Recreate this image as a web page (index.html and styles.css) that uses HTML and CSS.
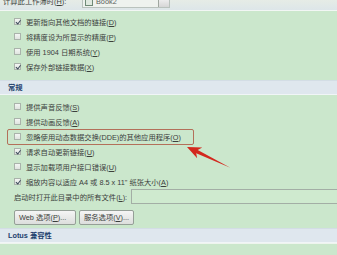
FILE: index.html
```html
<!DOCTYPE html>
<html lang="zh-CN">
<head>
  <meta charset="UTF-8">
  <title>Excel 选项 - 高级</title>
  <meta name="viewport" content="width=device-width, initial-scale=1.0">
  <link rel="stylesheet" href="styles.css">
</head>
<body>

<div class="page">

  <!-- 上一节末尾：计算此工作簿时 -->
  <div class="top">
    <span class="top-label">计算此工作簿时(<u>H</u>):</span>
    <span class="combo"><span class="combo-icon"></span><span>Book2</span><span class="combo-btn"></span></span>
  </div>

  <div class="group">
    <div class="opt"><span class="box on"></span><span>更新指向其他文档的链接(<u>D</u>)</span></div>
    <div class="opt"><span class="box"></span><span>将精度设为所显示的精度(<u>P</u>)</span></div>
    <div class="opt"><span class="box"></span><span>使用 1904 日期系统(<u>Y</u>)</span></div>
    <div class="opt"><span class="box on"></span><span>保存外部链接数据(<u>X</u>)</span></div>
  </div>

  <!-- 常规 -->
  <div class="section">常规</div>

  <div class="group">
    <div class="opt"><span class="box"></span><span>提供声音反馈(<u>S</u>)</span></div>
    <div class="opt"><span class="box"></span><span>提供动画反馈(<u>A</u>)</span></div>
    <div class="opt marked"><span class="box"></span><span>忽略使用动态数据交换(DDE)的其他应用程序(<u>O</u>)</span></div>
    <div class="opt"><span class="box on"></span><span>请求自动更新链接(<u>U</u>)</span></div>
    <div class="opt"><span class="box"></span><span>显示加载项用户接口错误(<u>U</u>)</span></div>
    <div class="opt"><span class="box on"></span><span>缩放内容以适应 A4 或 8.5 x 11" 纸张大小(<u>A</u>)</span></div>

    <div class="path-row">
      <span class="path-label">启动时打开此目录中的所有文件(<u>L</u>):</span>
      <span class="field"></span>
    </div>

    <div class="buttons">
      <span class="btn">Web 选项(<u>P</u>)...</span>
      <span class="btn">服务选项(<u>V</u>)...</span>
    </div>
  </div>

  <!-- Lotus 兼容性 -->
  <div class="section">Lotus 兼容性</div>
  <div class="rest"></div>

  <!-- 标注箭头 -->
  <svg class="arrow" width="337" height="255" viewBox="0 0 337 255">
    <g transform="translate(187 147) rotate(25)">
      <polygon points="0,0 14,-6 11,-1.8 48,0.4 11,1.8 14,6" fill="#d3281e"/>
    </g>
  </svg>

</div>

</body>
</html>
```

FILE: styles.css
```css
body {
  margin: 0;
  padding: 0;
  background: #cbe7cc;
  font-family: "Liberation Sans", "Noto Sans CJK SC", sans-serif;
  font-size: 7.3px;
  color: #3b403c;
  overflow: hidden;
}

.page {
  position: relative;
  width: 337px;
  height: 255px;
  overflow: hidden;
}

u {
  text-decoration: underline;
  text-underline-offset: 1px;
}

/* ===== top row ===== */
.top {
  height: 10px;
  background: linear-gradient(#e6ece6, #dde6e9);
  border-bottom: 1px solid #f2f6f4;
  display: flex;
  align-items: flex-end;
}

.top-label {
  padding-left: 3px;
  width: 79px;
  line-height: 10px;
  margin-bottom: 3px;
  white-space: nowrap;
}

.combo {
  width: 88px;
  height: 12px;
  margin-bottom: 2px;
  box-sizing: border-box;
  border: 1px solid #b9c2bd;
  background: #eef2ee;
  display: flex;
  align-items: center;
  gap: 3px;
  padding-left: 2px;
  line-height: 8px;
  color: #5a5f5b;
}

.combo-icon {
  width: 6px;
  height: 5px;
  border: 1px solid #6f8a76;
  background: #dfe9df;
}

.combo-btn {
  margin-left: auto;
  width: 10px;
  height: 9px;
  background: linear-gradient(#f3f3f3, #d6d6d6);
  border-left: 1px solid #9fa79f;
}

/* ===== option groups ===== */
.group {
  padding-left: 14px;
}

.group:nth-of-type(2) {
  padding-top: 3px;
  padding-bottom: 6px;
}

.group:nth-of-type(4) {
  padding-top: 4px;
  padding-bottom: 3px;
}

.opt {
  height: 15px;
  display: flex;
  align-items: center;
  gap: 5px;
  white-space: nowrap;
}

.box {
  width: 7px;
  height: 7px;
  box-sizing: border-box;
  border: 1px solid #aab3ab;
  background: linear-gradient(#f4f6f4, #dfe4df);
  position: relative;
  flex: none;
}

.box.on::after {
  content: "";
  position: absolute;
  left: 2px;
  top: 0;
  width: 1.5px;
  height: 3.5px;
  border-right: 1px solid #3c4a5a;
  border-bottom: 1px solid #3c4a5a;
  transform: rotate(38deg);
}

.opt.marked {
  margin-left: -7px;
  padding-left: 6px;
  width: 187px;
  height: 16px;
  margin-top: -0.5px;
  margin-bottom: -0.5px;
  box-sizing: border-box;
  border: 1.5px solid #b3705a;
  border-radius: 2px;
}

/* ===== section headers ===== */
.section {
  height: 13px;
  line-height: 13px;
  padding-left: 8px;
  background: #dfe7ee;
  border-top: 1px solid #d3dde5;
  border-bottom: 1px solid #f1f5f7;
  color: #22416d;
  font-weight: bold;
}

/* ===== path + buttons ===== */
.path-row {
  height: 15px;
  display: flex;
  align-items: center;
  white-space: nowrap;
}

.path-label {
  width: 117px;
}

.field {
  flex: 1;
  height: 15px;
  box-sizing: border-box;
  border: 1px solid #a3aea5;
  border-right: none;
  background: #cfeacf;
}

.buttons {
  display: flex;
  gap: 3px;
  padding-top: 6px;
}

.btn {
  height: 15px;
  box-sizing: border-box;
  line-height: 13px;
  padding: 0 4px;
  border: 1px solid #959f97;
  border-radius: 2px;
  background: linear-gradient(#f5f5f5, #dcdedc);
  color: #3a3e3b;
  white-space: nowrap;
}

.btn:first-child {
  width: 62px;
}

.btn:last-child {
  width: 55px;
}

.rest {
  height: 12px;
  border-top: 1px solid #eef4ee;
}

/* annotation */
.arrow {
  position: absolute;
  left: 0;
  top: 0;
  pointer-events: none;
}
```
